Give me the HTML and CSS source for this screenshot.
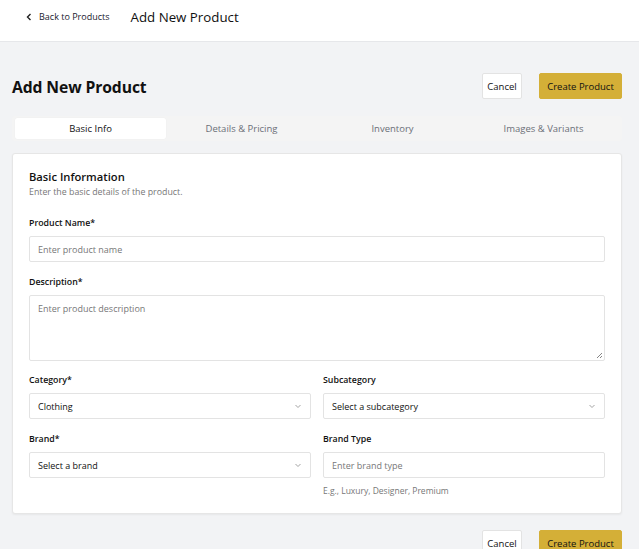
FILE: index.html
```html
<!DOCTYPE html>
<html>
<head>
<meta charset="utf-8">
<link rel="stylesheet" href="styles.css">
</head>
<body>
<header class="topbar">
  <a class="back" href="#">
    <svg width="8" height="8" viewBox="0 0 8 8"><path d="M5.5 1 L2.5 4 L5.5 7" fill="none" stroke="#222" stroke-width="1.4"/></svg>
    <span>Back to Products</span>
  </a>
  <span class="topbar-title">Add New Product</span>
</header>
<main class="page">
  <div class="page-head">
    <h1>Add New Product</h1>
    <div class="actions">
      <button class="btn btn-outline">Cancel</button>
      <button class="btn btn-primary">Create Product</button>
    </div>
  </div>
  <nav class="tabs">
    <div class="tab active">Basic Info</div>
    <div class="tab">Details &amp; Pricing</div>
    <div class="tab">Inventory</div>
    <div class="tab">Images &amp; Variants</div>
  </nav>
  <section class="card">
    <h2>Basic Information</h2>
    <p class="sub">Enter the basic details of the product.</p>
    <div class="field">
      <label>Product Name*</label>
      <div class="input placeholder">Enter product name</div>
    </div>
    <div class="field">
      <label>Description*</label>
      <div class="input textarea placeholder">Enter product description
        <svg class="grip" width="8" height="8" viewBox="0 0 8 8"><path d="M7 2 L2 7 M7 5 L5 7" stroke="#666" stroke-width="0.8"/></svg>
      </div>
    </div>
    <div class="grid">
      <div class="field">
        <label>Category*</label>
        <div class="input select">Clothing<svg width="8" height="8" viewBox="0 0 8 8"><path d="M1.5 3 L4 5.5 L6.5 3" fill="none" stroke="#999" stroke-width="0.9"/></svg></div>
      </div>
      <div class="field">
        <label>Subcategory</label>
        <div class="input select">Select a subcategory<svg width="8" height="8" viewBox="0 0 8 8"><path d="M1.5 3 L4 5.5 L6.5 3" fill="none" stroke="#999" stroke-width="0.9"/></svg></div>
      </div>
      <div class="field">
        <label>Brand*</label>
        <div class="input select">Select a brand<svg width="8" height="8" viewBox="0 0 8 8"><path d="M1.5 3 L4 5.5 L6.5 3" fill="none" stroke="#999" stroke-width="0.9"/></svg></div>
      </div>
      <div class="field">
        <label>Brand Type</label>
        <div class="input placeholder">Enter brand type</div>
        <p class="hint">E.g., Luxury, Designer, Premium</p>
      </div>
    </div>
  </section>
  <div class="bottom-actions">
    <button class="btn btn-outline">Cancel</button>
    <button class="btn btn-primary">Create Product</button>
  </div>
</main>
</body>
</html>
```
FILE: styles.css
```css
* { box-sizing: border-box; }
html, body { margin: 0; padding: 0; }
body {
  font-family: "Open Sans", "Noto Sans", sans-serif;
  background: #f2f3f5;
  color: #111;
  width: 639px;
  height: 549px;
  overflow: hidden;
}
.topbar {
  height: 42px;
  background: #fff;
  border-bottom: 1px solid #e6e7ea;
  display: flex;
  align-items: center;
  padding: 0 0 0 25px;
  gap: 21px;
  padding-bottom: 8px;
}
.back {
  display: flex;
  align-items: center;
  gap: 6px;
  color: #1a1a2e;
  text-decoration: none;
  font-size: 9px;
}
.topbar-title { font-size: 13.3px; color: #111; font-weight: 500; }
.page { padding: 0 17px 0 12px; }
.page-head {
  display: flex;
  justify-content: space-between;
  align-items: center;
  margin-top: 31px;
  height: 26px;
}
h1 { margin: 1px 0 0; font-size: 15.7px; font-weight: 700; letter-spacing: -0.1px; }
.actions, .bottom-actions { display: flex; gap: 17px; }
.btn {
  height: 26px;
  font-family: inherit;
  font-size: 9.5px;
  border-radius: 2px;
  padding: 0 10px;
  color: #111;
}
.btn-outline { background: #fff; border: 1px solid #e3e3e3; width: 40px; padding: 0; }
.btn-primary { background: #d4af37; border: 1px solid #d4af37; width: 83px; padding: 0; }
.tabs {
  margin-top: 17px;
  display: grid;
  grid-template-columns: repeat(4, 1fr);
  background: #f4f4f4;
  padding: 2px 3px;
  height: 25px;
  border-radius: 2px;
}
.tab {
  display: flex; align-items: center; justify-content: center;
  font-size: 9.5px; color: #6b6f78;
}
.tab.active { background: #fff; color: #111; border-radius: 2px; box-shadow: 0 0 1px rgba(0,0,0,0.08); }
.card {
  margin-top: 12px;
  background: #fff;
  border: 1px solid #e6e6e6;
  border-radius: 3px;
  box-shadow: 0 1px 2px rgba(0,0,0,0.05);
  padding: 15px 16px 16px 16px;
  height: 361px;
}
h2 { margin: 0; font-size: 11.2px; font-weight: 600; line-height: 16px; }
.sub { margin: 1px 0 0; font-size: 8.8px; color: #777; line-height: 12px; }
.field { display: flex; flex-direction: column; }
.card > .field:first-of-type { margin-top: 18px; }
.card > .field + .field { margin-top: 13px; }
label { font-size: 8.8px; font-weight: 600; line-height: 14px; margin-bottom: 6px; color: #111; }
.input {
  height: 26px;
  border: 1px solid #e3e3e3;
  border-radius: 2px;
  font-size: 9px;
  padding: 0 8px;
  display: flex; align-items: center;
  color: #111;
  position: relative;
}
.placeholder { color: #777; }
.textarea { height: 66px; align-items: flex-start; padding-top: 6px; }
.grip { position: absolute; right: 1px; bottom: 1px; }
.select { justify-content: space-between; }
.grid {
  margin-top: 12px;
  display: grid;
  grid-template-columns: 1fr 1fr;
  column-gap: 12px;
  row-gap: 13px;
}
.hint { margin: 7px 0 0; font-size: 8.5px; color: #777; }
.bottom-actions { justify-content: flex-end; margin-top: 16px; }
```
